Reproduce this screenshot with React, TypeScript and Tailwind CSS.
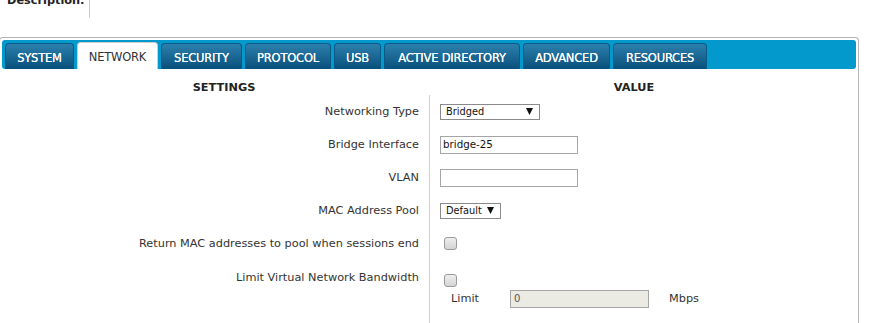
import React from 'react';

const tabs = [
  { name: 'SYSTEM', w: 'w-[69px]' },
  { name: 'NETWORK', w: 'w-[81px]', active: true },
  { name: 'SECURITY', w: 'w-[81px]' },
  { name: 'PROTOCOL', w: 'w-[86px]' },
  { name: 'USB', w: 'w-[47px]' },
  { name: 'ACTIVE DIRECTORY', w: 'w-[136px]' },
  { name: 'ADVANCED', w: 'w-[87px]' },
  { name: 'RESOURCES', w: 'w-[94px]' },
];

function Arrow() {
  return (
    <svg width="7" height="7" viewBox="0 0 7 7" className="shrink-0">
      <polygon points="0,0 7,0 3.5,7" fill="#111" />
    </svg>
  );
}

function Select({ value, width }: { value: string; width: string }) {
  return (
    <div
      className={`${width} flex h-[16px] items-center justify-between border border-[#8a8a8a] bg-white pl-[5px] pr-[6px] text-[9.8px] leading-none text-[#111]`}
    >
      <span>{value}</span>
      <Arrow />
    </div>
  );
}

function TextBox({ value, width }: { value?: string; width: string }) {
  return (
    <div
      className={`${width} flex h-[18px] items-center border border-[#a6a6a6] bg-white pl-[2px] text-[10.3px] leading-none text-[#111]`}
    >
      {value}
    </div>
  );
}

function Check() {
  return (
    <span className="ml-[4px] block h-[13px] w-[13px] rounded-[3px] border border-[#9a9a9a] bg-gradient-to-b from-[#eeeeee] to-[#d4d4d4]" />
  );
}

function Row({ label, children }: { label: string; children: React.ReactNode }) {
  return (
    <div className="grid h-[33px] grid-cols-2">
      <div className="flex items-center justify-end pr-[10px] text-[#333]">{label}</div>
      <div className="flex items-center border-l border-[#cfcfcf] pl-[10px]">{children}</div>
    </div>
  );
}

export default function App() {
  return (
    <div className="h-[323px] w-[877px] overflow-hidden bg-white font-['DejaVu_Sans',Verdana,sans-serif] text-[11.3px] leading-[14px]">
      {/* description field, mostly scrolled off */}
      <div className="-mt-[6px] flex">
        <div className="h-[24px] w-[90px] border-r border-[#cccccc] pl-[7px] font-bold text-[#222]">Description:</div>
      </div>

      <div className="-ml-px mt-[19px] w-[860px] rounded-t-[4px] border border-b-0 border-[#b4b4b4] px-[2px] pt-[2px]">
        <div className="flex h-[29px] items-end gap-[3px] rounded-[3px] bg-[#0399cc] pl-[3px]">
          {tabs.map((t) =>
            t.active ? (
              <div
                key={t.name}
                className={`${t.w} flex h-[27px] items-center justify-center rounded-t-[4px] border border-b-0 border-[#cfcfcf] bg-white pt-[2px] text-[11.5px] tracking-[-0.2px] text-[#333]`}
              >
                {t.name}
              </div>
            ) : (
              <div
                key={t.name}
                className={`${t.w} flex h-[26px] items-center justify-center rounded-t-[4px] border border-b-0 border-[#0a5a88] bg-gradient-to-b from-[#2c80ad] to-[#08507c] pt-[2px] text-[11.5px] tracking-[-0.2px] text-white [text-shadow:0_0_0.6px_#fff]`}
              >
                {t.name}
              </div>
            )
          )}
        </div>

        <div className="ml-[17px] w-[820px]">
          <div className="grid h-[26px] grid-cols-2 pt-[12px] font-bold text-[#222]">
            <div className="text-center">SETTINGS</div>
            <div className="text-center">VALUE</div>
          </div>

          <Row label="Networking Type">
            <Select value="Bridged" width="w-[100px]" />
          </Row>
          <Row label="Bridge Interface">
            <TextBox value="bridge-25" width="w-[138px]" />
          </Row>
          <Row label="VLAN">
            <TextBox width="w-[138px]" />
          </Row>
          <Row label="MAC Address Pool">
            <Select value="Default" width="w-[61px]" />
          </Row>
          <Row label="Return MAC addresses to pool when sessions end">
            <Check />
          </Row>

          <div className="grid h-[80px] grid-cols-2">
            <div className="pr-[10px] pt-[11px] text-right text-[#333]">Limit Virtual Network Bandwidth</div>
            <div className="border-l border-[#cfcfcf] pl-[10px] pt-[14px]">
              <Check />
              <div className="mt-[3px] flex items-center">
                <span className="w-[70px] pl-[11px] text-[#333]">Limit</span>
                <div className="flex h-[18px] w-[139px] items-center border border-[#a6a6a6] bg-[#ebebe4] pl-[3px] text-[10px] leading-none text-[#555]">
                  0
                </div>
                <span className="ml-[20px] text-[#333]">Mbps</span>
              </div>
            </div>
          </div>
        </div>
      </div>
    </div>
  );
}
